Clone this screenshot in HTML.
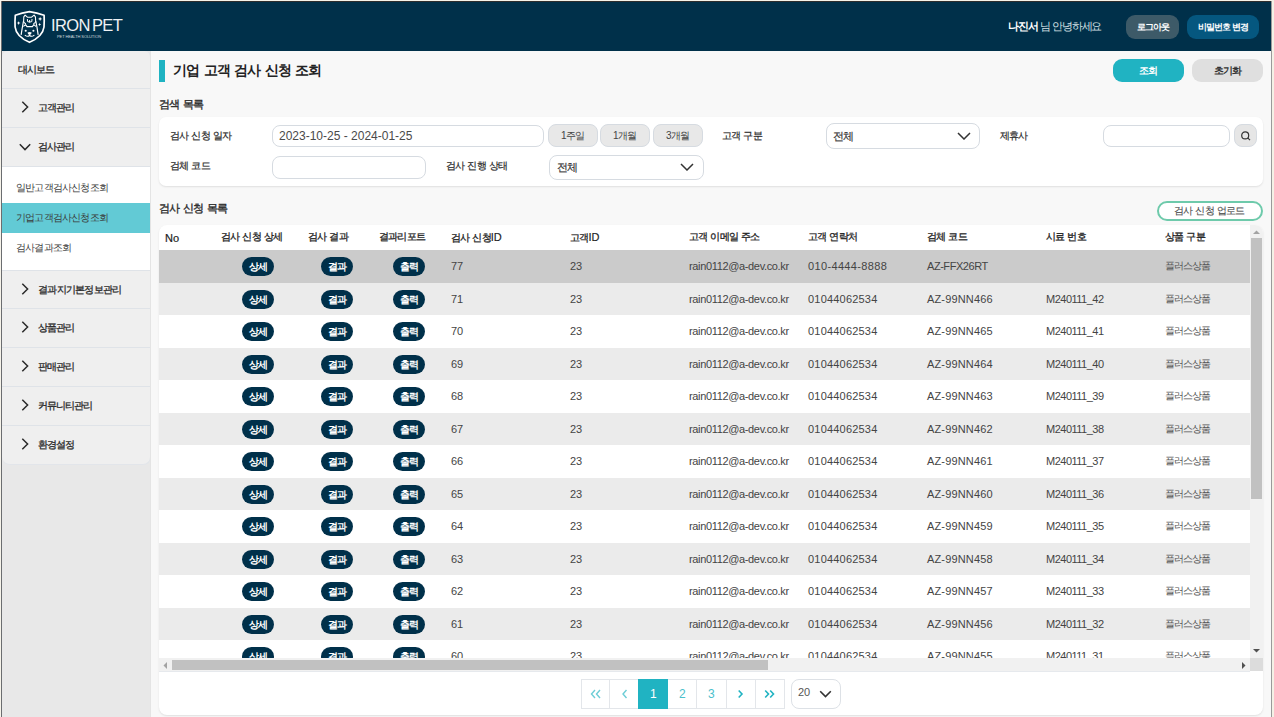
<!DOCTYPE html>
<html><head><meta charset="utf-8">
<style>
*{box-sizing:border-box;margin:0;padding:0}
html,body{width:1274px;height:717px;overflow:hidden;background:#e8e8e8;font-family:"Liberation Sans",sans-serif;color:#333}
.abs{position:absolute}
.t{position:absolute;white-space:nowrap}
#header{position:absolute;left:2px;top:2px;width:1269px;height:49px;background:#00304a}
#logo-text{position:absolute;left:49px;top:15px;color:#eef2f4;font-size:16.5px;letter-spacing:-0.6px;word-spacing:-1.9px;line-height:16px;font-weight:normal}
#logo-sub{position:absolute;left:55px;top:32px;color:#cfd8dc;font-size:4px;line-height:5px;letter-spacing:-0.1px}
.hbtn{position:absolute;top:13px;height:24px;border-radius:9px;color:#fff;font-size:9px;font-weight:bold;text-align:center;line-height:24px;letter-spacing:-1px}
#sidebar{position:absolute;left:2px;top:51px;width:149px;height:414px;background:#efefef;border-radius:6px 6px 8px 8px;overflow:hidden;border-right:1px solid #e2e5ea;border-bottom:1px solid #e2e5ea}
.mi{position:absolute;left:0;width:148px;height:39px;border-bottom:1px solid #dfe3e8}
.ml{position:absolute;left:36px;top:14px;line-height:10px;font-size:10px;color:#2a2a2a;letter-spacing:-1px;white-space:nowrap;-webkit-text-stroke:0.3px #2a2a2a}
.sub{position:absolute;left:0;width:148px;height:30px}
.sl{position:absolute;left:14px;top:10px;line-height:10px;font-size:10px;color:#3a3a3a;letter-spacing:-0.8px;white-space:nowrap}
#main{position:absolute;left:150px;top:51px;width:1121px;height:666px;background:#f8f8f8;border-left:1px solid #e4e4e4}
.btn{position:absolute;top:8px;height:23px;width:71px;border-radius:9px;font-size:10px;font-weight:bold;text-align:center;line-height:23px;letter-spacing:-0.8px}
.sec{position:absolute;left:9px;font-size:11px;line-height:11px;color:#2a2a2a;letter-spacing:-0.7px;word-spacing:1px;-webkit-text-stroke:0.35px #2a2a2a}
.card{position:absolute;background:#fff;border-radius:7px;box-shadow:0 1px 2px rgba(0,0,0,0.10)}
.lbl{position:absolute;font-size:10px;line-height:10px;color:#2a2a2a;letter-spacing:-0.8px;word-spacing:1px;white-space:nowrap;-webkit-text-stroke:0.2px #2a2a2a}
.inp{position:absolute;height:22px;border:1px solid #d6dbe1;border-radius:8px;background:#fff}
.qb{position:absolute;top:124px;height:23px;width:50px;border:1px solid #d6dbe1;border-radius:8px;background:#e8e8e8;font-size:10px;color:#444;text-align:center;line-height:21px;letter-spacing:-0.6px}
.th{position:absolute;top:7px;font-size:10px;line-height:10px;color:#222;letter-spacing:-0.8px;word-spacing:1px;white-space:nowrap;-webkit-text-stroke:0.3px #222}
.r{position:absolute;left:0;width:1091px;height:32.5px;background:#fff}
.r.g{background:#ebebeb}
.r.sel{background:#cbcbcb}
.b{position:absolute;top:7px;height:19px;width:32px;border-radius:9.5px;background:#00304a;color:#fff;font-size:10px;font-weight:bold;text-align:center;line-height:19px;letter-spacing:-1px;text-indent:-1px}
.c{position:absolute;top:10px;font-size:11px;line-height:12px;color:#444;white-space:nowrap}
.em{letter-spacing:-0.35px}
.ph{letter-spacing:0.2px}
.ph1{letter-spacing:0.35px}
.cd1{letter-spacing:-0.45px}
.cd{letter-spacing:0.15px}
.sm{letter-spacing:-0.5px}
.k{color:#555;font-size:10px;letter-spacing:-0.9px;top:11px;line-height:10px}
</style></head><body>
<div id="header">
  <svg class="abs" style="left:8px;top:6px" width="40" height="40" viewBox="0 0 40 40">
    <g fill="none" stroke="#fff" stroke-linejoin="round" stroke-linecap="round">
      <path stroke-width="1.7" d="M5.3 7.2 Q12 4.6 19.5 3.6 Q27 4.6 34.1 7.2 Q34.4 13 34 19 C33 27 26 31.5 19.5 34.3 C13 31.5 6 27 5.1 19 Q4.8 13 5.3 7.2 Z"/>
      <path stroke-width="1.1" d="M13.6 13.8 L13.8 8.8 L15.1 7.1 L17.4 9.2 L21.6 9.2 L24.1 7.1 L25.4 8.8 L25.7 13.8 Q25 15.2 23.8 15.6 M15.5 15.6 Q14.3 15.2 13.6 13.8"/>
      <path stroke-width="1.0" d="M17.4 11.4 L17.6 13.6 Q19.6 14.6 21.8 13.6 L22 11.4 M19.6 12.4 L19.6 14"/>
      <path stroke-width="1.2" d="M13.4 13.5 Q12.2 20 11.2 26.3 M25.9 13.5 Q27.2 20 28.1 26.3"/>
      <path stroke-width="1.1" d="M13.8 18.2 L15.6 16.6 L17 18.6 L22.4 18.6 L23.8 16.6 L25.6 18.2"/>
      <path stroke-width="1.1" d="M15.2 27.3 Q17.5 29.2 19.6 27.5 Q21.7 29.2 24 27.3"/>
    </g>
    <g fill="#fff">
      <circle cx="15.7" cy="22.8" r="1.05"/><circle cx="23.4" cy="22.8" r="1.05"/>
      <path d="M17.5 24.4 Q19.6 23.6 21.7 24.4 Q21.3 26.6 19.6 27 Q17.9 26.6 17.5 24.4 Z"/>
      <path d="M8.6 13.3 L9.2 14.6 L10.5 15.1 L9.2 15.6 L8.6 16.9 L8 15.6 L6.7 15.1 L8 14.6 Z"/>
      <path d="M30.1 8.9 L30.8 10.3 L32.2 10.9 L30.8 11.5 L30.1 12.9 L29.4 11.5 L28 10.9 L29.4 10.3 Z"/>
      <path d="M29.6 15 L30.1 16 L31.1 16.5 L30.1 17 L29.6 18 L29.1 17 L28.1 16.5 L29.1 16 Z"/>
    </g>
  </svg>
  <div id="logo-text">IRON PET</div>
  <div id="logo-sub">PET HEALTH SOLUTION</div>
  <div class="t" style="left:1006px;top:19px;font-size:11px;line-height:11px;font-weight:bold;color:#fff;letter-spacing:-1.2px">나진서</div>
  <div class="t" style="left:1038px;top:19px;font-size:11px;line-height:11px;color:#d5e0e5;letter-spacing:-1.1px">님 안녕하세요</div>
  <div class="hbtn" style="left:1124px;width:53px;background:#3d5a68">로그아웃</div>
  <div class="hbtn" style="left:1185px;width:72px;background:#05577f">비밀번호 변경</div>
</div>
<div id="sidebar">
  <div class="mi" style="top:0;height:38px"><span class="ml" style="left:16px">대시보드</span></div>
  <div class="mi" style="top:38px;height:39px;"><svg class="abs" style="left:19px;top:12px" width="8" height="12" viewBox="0 0 8 12"><path d="M1.3 0.8 L6.6 6 L1.3 11.2" fill="none" stroke="#2a2a2a" stroke-width="1.5"/></svg><span class="ml">고객관리</span></div>
  <div class="mi" style="top:77px"><svg class="abs" style="left:17px;top:15px" width="12" height="8" viewBox="0 0 12 8"><path d="M0.8 1.3 L6 6.6 L11.2 1.3" fill="none" stroke="#2a2a2a" stroke-width="1.5"/></svg><span class="ml">검사관리</span></div>
  <div class="abs" style="left:0;top:116px;width:148px;height:103px;background:#fff"></div>
  <div class="sub" style="top:122px"><span class="sl">일반고객검사신청조회</span></div>
  <div class="sub" style="top:152px;background:#62cad5"><span class="sl">기업고객검사신청조회</span></div>
  <div class="sub" style="top:182px"><span class="sl">검사결과조회</span></div>
  <div class="abs" style="left:0;top:219px;width:148px;height:1px;background:#dfe3e8"></div>
  <div class="mi" style="top:220px;height:38px;"><svg class="abs" style="left:19px;top:12px" width="8" height="12" viewBox="0 0 8 12"><path d="M1.3 0.8 L6.6 6 L1.3 11.2" fill="none" stroke="#2a2a2a" stroke-width="1.5"/></svg><span class="ml" style="letter-spacing:-0.75px">결과지기본정보관리</span></div>
  <div class="mi" style="top:258px;height:39px;"><svg class="abs" style="left:19px;top:12px" width="8" height="12" viewBox="0 0 8 12"><path d="M1.3 0.8 L6.6 6 L1.3 11.2" fill="none" stroke="#2a2a2a" stroke-width="1.5"/></svg><span class="ml">상품관리</span></div>
  <div class="mi" style="top:297px;height:39px;"><svg class="abs" style="left:19px;top:12px" width="8" height="12" viewBox="0 0 8 12"><path d="M1.3 0.8 L6.6 6 L1.3 11.2" fill="none" stroke="#2a2a2a" stroke-width="1.5"/></svg><span class="ml">판매관리</span></div>
  <div class="mi" style="top:336px;height:39px;"><svg class="abs" style="left:19px;top:12px" width="8" height="12" viewBox="0 0 8 12"><path d="M1.3 0.8 L6.6 6 L1.3 11.2" fill="none" stroke="#2a2a2a" stroke-width="1.5"/></svg><span class="ml">커뮤니티관리</span></div>
  <div class="mi" style="top:375px;height:39px;border-bottom:none"><svg class="abs" style="left:19px;top:12px" width="8" height="12" viewBox="0 0 8 12"><path d="M1.3 0.8 L6.6 6 L1.3 11.2" fill="none" stroke="#2a2a2a" stroke-width="1.5"/></svg><span class="ml">환경설정</span></div>
</div>
<div id="main"></div>
<!-- page-coord content -->
<div class="abs" style="left:159px;top:60px;width:6px;height:22px;background:#1fb3c2"></div>
<div class="t" style="left:173px;top:64px;font-size:13.5px;line-height:13.5px;font-weight:bold;color:#222;letter-spacing:-0.9px;word-spacing:1.5px">기업 고객 검사 신청 조회</div>
<div class="btn" style="left:1113px;top:59px;background:#20b3c2;color:#fff">조회</div>
<div class="btn" style="left:1192px;top:59px;background:#dfdfdf;color:#333">초기화</div>
<div class="t sec" style="left:159px;top:99px">검색 목록</div>
<div class="card" style="left:159px;top:117px;width:1104px;height:69px"></div>
<div class="lbl" style="left:170px;top:131px">검사 신청 일자</div>
<div class="lbl" style="left:170px;top:161px">검체 코드</div>
<div class="inp" style="left:272px;top:125px;width:272px"></div>
<div class="t" style="left:279px;top:130px;font-size:12px;line-height:12px;color:#4a4a4a">2023-10-25 - 2024-01-25</div>
<div class="inp" style="left:272px;top:156px;width:154px;height:23px"></div>
<div class="qb" style="left:548px">1주일</div>
<div class="qb" style="left:600px">1개월</div>
<div class="qb" style="left:653px">3개월</div>
<div class="lbl" style="left:446px;top:161px">검사 진행 상태</div>
<div class="inp" style="left:549px;top:155px;width:155px;height:25px"></div>
<div class="lbl" style="left:557px;top:162px;font-size:11px;color:#444">전체</div>
<svg class="abs" style="left:680px;top:163px" width="14" height="8" viewBox="0 0 14 8"><path d="M1 1 L7 7 L13 1" fill="none" stroke="#333" stroke-width="1.5"/></svg>
<div class="lbl" style="left:722px;top:131px">고객 구분</div>
<div class="inp" style="left:826px;top:123px;width:154px;height:26px"></div>
<div class="lbl" style="left:833px;top:131px;font-size:11px;color:#444">전체</div>
<svg class="abs" style="left:957px;top:132px" width="14" height="8" viewBox="0 0 14 8"><path d="M1 1 L7 7 L13 1" fill="none" stroke="#333" stroke-width="1.5"/></svg>
<div class="lbl" style="left:1000px;top:131px">제휴사</div>
<div class="inp" style="left:1103px;top:125px;width:127px"></div>
<div class="abs" style="left:1234px;top:124px;width:23px;height:23px;border:1px solid #d6dbe1;border-radius:8px;background:#e6e6e6"><svg class="abs" style="left:5px;top:5px" width="12" height="12" viewBox="0 0 12 12"><circle cx="5.2" cy="5.4" r="3.5" fill="none" stroke="#333" stroke-width="1.2"/><path d="M7.7 7.9 L10 10.2" stroke="#333" stroke-width="1.2"/></svg></div>
<div class="t sec" style="left:159px;top:203px">검사 신청 목록</div>
<div class="abs" style="left:1157px;top:201px;width:106px;height:20px;border:2px solid #6ecaab;border-radius:10px;background:#fff"></div>
<div class="lbl" style="left:1174px;top:206px;color:#4a4a4a;letter-spacing:-0.8px;-webkit-text-stroke:0.1px #4a4a4a">검사 신청 업로드</div>
<div class="card" style="left:159px;top:225px;width:1104px;height:490px;border-radius:8px"></div>
<div class="abs" style="left:159px;top:225px;width:1091px;height:433px;overflow:hidden;border-top-left-radius:8px">
  <div class="th" style="left:6px;top:8px;font-size:11px;letter-spacing:0;-webkit-text-stroke:0.2px #222">No</div>
  <div class="th" style="left:62px">검사 신청 상세</div>
  <div class="th" style="left:149px">검사 결과</div>
  <div class="th" style="left:220px">결과리포트</div>
  <div class="th" style="left:292px">검사 신청<span style="letter-spacing:0;font-size:11px;-webkit-text-stroke:0.15px #222">ID</span></div>
  <div class="th" style="left:411px">고객<span style="letter-spacing:0;font-size:11px;-webkit-text-stroke:0.15px #222">ID</span></div>
  <div class="th" style="left:530px">고객 이메일 주소</div>
  <div class="th" style="left:649px">고객 연락처</div>
  <div class="th" style="left:768px">검체 코드</div>
  <div class="th" style="left:887px">시료 번호</div>
  <div class="th" style="left:1006px">상품 구분</div>
<div class="r sel" style="top:25.0px"><span class="b" style="left:83px">상세</span><span class="b" style="left:162px">결과</span><span class="b" style="left:234px">출력</span><span class="c" style="left:292px">77</span><span class="c" style="left:411px">23</span><span class="c em" style="left:530px">rain0112@a-dev.co.kr</span><span class="c ph1" style="left:649px">010-4444-8888</span><span class="c cd1" style="left:768px">AZ-FFX26RT</span><span class="c sm" style="left:887px"></span><span class="c k" style="left:1006px">플러스상품</span></div>
<div class="r g" style="top:57.5px"><span class="b" style="left:83px">상세</span><span class="b" style="left:162px">결과</span><span class="b" style="left:234px">출력</span><span class="c" style="left:292px">71</span><span class="c" style="left:411px">23</span><span class="c em" style="left:530px">rain0112@a-dev.co.kr</span><span class="c ph" style="left:649px">01044062534</span><span class="c cd" style="left:768px">AZ-99NN466</span><span class="c sm" style="left:887px">M240111_42</span><span class="c k" style="left:1006px">플러스상품</span></div>
<div class="r" style="top:90.0px"><span class="b" style="left:83px">상세</span><span class="b" style="left:162px">결과</span><span class="b" style="left:234px">출력</span><span class="c" style="left:292px">70</span><span class="c" style="left:411px">23</span><span class="c em" style="left:530px">rain0112@a-dev.co.kr</span><span class="c ph" style="left:649px">01044062534</span><span class="c cd" style="left:768px">AZ-99NN465</span><span class="c sm" style="left:887px">M240111_41</span><span class="c k" style="left:1006px">플러스상품</span></div>
<div class="r g" style="top:122.5px"><span class="b" style="left:83px">상세</span><span class="b" style="left:162px">결과</span><span class="b" style="left:234px">출력</span><span class="c" style="left:292px">69</span><span class="c" style="left:411px">23</span><span class="c em" style="left:530px">rain0112@a-dev.co.kr</span><span class="c ph" style="left:649px">01044062534</span><span class="c cd" style="left:768px">AZ-99NN464</span><span class="c sm" style="left:887px">M240111_40</span><span class="c k" style="left:1006px">플러스상품</span></div>
<div class="r" style="top:155.0px"><span class="b" style="left:83px">상세</span><span class="b" style="left:162px">결과</span><span class="b" style="left:234px">출력</span><span class="c" style="left:292px">68</span><span class="c" style="left:411px">23</span><span class="c em" style="left:530px">rain0112@a-dev.co.kr</span><span class="c ph" style="left:649px">01044062534</span><span class="c cd" style="left:768px">AZ-99NN463</span><span class="c sm" style="left:887px">M240111_39</span><span class="c k" style="left:1006px">플러스상품</span></div>
<div class="r g" style="top:187.5px"><span class="b" style="left:83px">상세</span><span class="b" style="left:162px">결과</span><span class="b" style="left:234px">출력</span><span class="c" style="left:292px">67</span><span class="c" style="left:411px">23</span><span class="c em" style="left:530px">rain0112@a-dev.co.kr</span><span class="c ph" style="left:649px">01044062534</span><span class="c cd" style="left:768px">AZ-99NN462</span><span class="c sm" style="left:887px">M240111_38</span><span class="c k" style="left:1006px">플러스상품</span></div>
<div class="r" style="top:220.0px"><span class="b" style="left:83px">상세</span><span class="b" style="left:162px">결과</span><span class="b" style="left:234px">출력</span><span class="c" style="left:292px">66</span><span class="c" style="left:411px">23</span><span class="c em" style="left:530px">rain0112@a-dev.co.kr</span><span class="c ph" style="left:649px">01044062534</span><span class="c cd" style="left:768px">AZ-99NN461</span><span class="c sm" style="left:887px">M240111_37</span><span class="c k" style="left:1006px">플러스상품</span></div>
<div class="r g" style="top:252.5px"><span class="b" style="left:83px">상세</span><span class="b" style="left:162px">결과</span><span class="b" style="left:234px">출력</span><span class="c" style="left:292px">65</span><span class="c" style="left:411px">23</span><span class="c em" style="left:530px">rain0112@a-dev.co.kr</span><span class="c ph" style="left:649px">01044062534</span><span class="c cd" style="left:768px">AZ-99NN460</span><span class="c sm" style="left:887px">M240111_36</span><span class="c k" style="left:1006px">플러스상품</span></div>
<div class="r" style="top:285.0px"><span class="b" style="left:83px">상세</span><span class="b" style="left:162px">결과</span><span class="b" style="left:234px">출력</span><span class="c" style="left:292px">64</span><span class="c" style="left:411px">23</span><span class="c em" style="left:530px">rain0112@a-dev.co.kr</span><span class="c ph" style="left:649px">01044062534</span><span class="c cd" style="left:768px">AZ-99NN459</span><span class="c sm" style="left:887px">M240111_35</span><span class="c k" style="left:1006px">플러스상품</span></div>
<div class="r g" style="top:317.5px"><span class="b" style="left:83px">상세</span><span class="b" style="left:162px">결과</span><span class="b" style="left:234px">출력</span><span class="c" style="left:292px">63</span><span class="c" style="left:411px">23</span><span class="c em" style="left:530px">rain0112@a-dev.co.kr</span><span class="c ph" style="left:649px">01044062534</span><span class="c cd" style="left:768px">AZ-99NN458</span><span class="c sm" style="left:887px">M240111_34</span><span class="c k" style="left:1006px">플러스상품</span></div>
<div class="r" style="top:350.0px"><span class="b" style="left:83px">상세</span><span class="b" style="left:162px">결과</span><span class="b" style="left:234px">출력</span><span class="c" style="left:292px">62</span><span class="c" style="left:411px">23</span><span class="c em" style="left:530px">rain0112@a-dev.co.kr</span><span class="c ph" style="left:649px">01044062534</span><span class="c cd" style="left:768px">AZ-99NN457</span><span class="c sm" style="left:887px">M240111_33</span><span class="c k" style="left:1006px">플러스상품</span></div>
<div class="r g" style="top:382.5px"><span class="b" style="left:83px">상세</span><span class="b" style="left:162px">결과</span><span class="b" style="left:234px">출력</span><span class="c" style="left:292px">61</span><span class="c" style="left:411px">23</span><span class="c em" style="left:530px">rain0112@a-dev.co.kr</span><span class="c ph" style="left:649px">01044062534</span><span class="c cd" style="left:768px">AZ-99NN456</span><span class="c sm" style="left:887px">M240111_32</span><span class="c k" style="left:1006px">플러스상품</span></div>
<div class="r" style="top:415.0px"><span class="b" style="left:83px">상세</span><span class="b" style="left:162px">결과</span><span class="b" style="left:234px">출력</span><span class="c" style="left:292px">60</span><span class="c" style="left:411px">23</span><span class="c em" style="left:530px">rain0112@a-dev.co.kr</span><span class="c ph" style="left:649px">01044062534</span><span class="c cd" style="left:768px">AZ-99NN455</span><span class="c sm" style="left:887px">M240111_31</span><span class="c k" style="left:1006px">플러스상품</span></div>
</div>
<div class="abs" style="left:1250px;top:225px;width:13px;height:446px;background:#f1f1f1;border-top-right-radius:8px"></div>
<div class="abs" style="left:1251px;top:238px;width:11px;height:261px;background:#c1c1c1"></div>
<svg class="abs" style="left:1252px;top:229px" width="9" height="6" viewBox="0 0 9 6"><path d="M1 5 L4.5 1.5 L8 5 Z" fill="#a3a3a3"/></svg>
<svg class="abs" style="left:1252px;top:648px" width="9" height="6" viewBox="0 0 9 6"><path d="M1 1 L4.5 4.5 L8 1 Z" fill="#505050"/></svg>
<div class="abs" style="left:159px;top:658px;width:1091px;height:13px;background:#f1f1f1"></div><div class="abs" style="left:159px;top:671px;width:1091px;height:1px;background:#e6e9ed"></div>
<div class="abs" style="left:1250px;top:658px;width:13px;height:13px;background:#dcdcdc"></div>
<div class="abs" style="left:172px;top:660px;width:596px;height:10px;background:#c1c1c1"></div>
<svg class="abs" style="left:162px;top:661px" width="6" height="9" viewBox="0 0 6 9"><path d="M5 1 L1.5 4.5 L5 8 Z" fill="#a3a3a3"/></svg>
<svg class="abs" style="left:1241px;top:661px" width="6" height="9" viewBox="0 0 6 9"><path d="M1 1 L4.5 4.5 L1 8 Z" fill="#505050"/></svg>
<div class="abs" style="left:581px;top:679px;width:204px;height:30px;border:1px solid #e3e6ea;background:#fff"></div>
<div class="abs" style="left:609px;top:680px;width:1px;height:28px;background:#e3e6ea"></div><div class="abs" style="left:638px;top:680px;width:1px;height:28px;background:#e3e6ea"></div><div class="abs" style="left:667px;top:680px;width:1px;height:28px;background:#e3e6ea"></div><div class="abs" style="left:696px;top:680px;width:1px;height:28px;background:#e3e6ea"></div><div class="abs" style="left:726px;top:680px;width:1px;height:28px;background:#e3e6ea"></div><div class="abs" style="left:755px;top:680px;width:1px;height:28px;background:#e3e6ea"></div><div class="abs" style="left:638px;top:679px;width:30px;height:30px;background:#20b3c2"></div>
<svg class="abs" style="left:589px;top:688px" width="14" height="12" viewBox="0 0 14 12"><path d="M6 2 L2.5 6 L6 10 M11 2 L7.5 6 L11 10" fill="none" stroke="#6ccdd6" stroke-width="1.4"/></svg>
<svg class="abs" style="left:621px;top:688px" width="8" height="12" viewBox="0 0 8 12"><path d="M5.5 2 L2 6 L5.5 10" fill="none" stroke="#6ccdd6" stroke-width="1.4"/></svg>
<div class="t" style="left:650px;top:688px;font-size:12px;line-height:12px;color:#fff">1</div>
<div class="t" style="left:679px;top:688px;font-size:12px;line-height:12px;color:#4cc0cc">2</div>
<div class="t" style="left:708px;top:688px;font-size:12px;line-height:12px;color:#4cc0cc">3</div>
<svg class="abs" style="left:736px;top:688px" width="8" height="12" viewBox="0 0 8 12"><path d="M2.7 2.5 L6 6 L2.7 9.5" fill="none" stroke="#20b3c2" stroke-width="1.6"/></svg>
<svg class="abs" style="left:762px;top:688px" width="14" height="12" viewBox="0 0 14 12"><path d="M3.2 2.5 L6.5 6 L3.2 9.5 M8.2 2.5 L11.5 6 L8.2 9.5" fill="none" stroke="#20b3c2" stroke-width="1.6"/></svg>
<div class="abs" style="left:791px;top:679px;width:50px;height:30px;border:1px solid #dde1e6;border-radius:8px;background:#fff"></div>
<div class="t" style="left:798px;top:687px;font-size:11px;line-height:11px;color:#555">20</div>
<svg class="abs" style="left:819px;top:690px" width="13" height="8" viewBox="0 0 13 8"><path d="M1.2 1.2 L6.5 6.5 L11.8 1.2" fill="none" stroke="#333" stroke-width="1.6"/></svg>
<div class="abs" style="left:0;top:0;width:1274px;height:1px;background:#f6f3ea"></div>
<div class="abs" style="left:0;top:1px;width:1274px;height:1px;background:#2e2e2e"></div>
<div class="abs" style="left:0;top:0;width:1px;height:717px;background:#f6f3ea"></div>
<div class="abs" style="left:1px;top:1px;width:1px;height:716px;background:#6b6d70"></div>
<div class="abs" style="left:1271px;top:1px;width:1px;height:716px;background:#9a9a9a"></div>
<div class="abs" style="left:1272px;top:0;width:2px;height:717px;background:#f4f1e6"></div>
</body></html>
